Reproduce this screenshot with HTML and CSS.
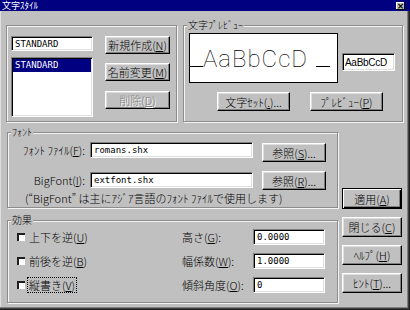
FILE: index.html
```html
<!DOCTYPE html>
<html lang="ja">
<head>
<meta charset="utf-8">
<title>文字スタイル</title>
<link rel="stylesheet" href="styles.css">
</head>
<body>
<div class="win">
  <div class="title">
    <span class="title-text">文字ｽﾀｲﾙ</span>
    <span class="close">×</span>
  </div>
  <div class="top">
    <div class="group g-style">
      <div class="style-left">
        <div class="field f-name">STANDARD</div>
        <div class="list"><div class="list-sel">STANDARD</div></div>
      </div>
      <div class="style-btns">
        <div class="btn b-style">新規作成(<u>N</u>)</div>
        <div class="btn b-style">名前変更(<u>M</u>)</div>
        <div class="btn b-style disabled">削除(<u>D</u>)</div>
      </div>
    </div>
    <div class="group g-preview">
      <span class="legend">文字ﾌﾟﾚﾋﾞｭｰ</span>
      <div class="pv-row">
        <div class="pv-box"><span class="pv-line"></span><span class="pv-text">AaBbCcD</span><span class="pv-line pv-line-r"></span></div>
        <div class="field pv-small">AaBbCcD</div>
      </div>
      <div class="pv-btns">
        <div class="btn b-pv">文字ｾｯﾄ(<u>.</u>)...</div>
        <div class="btn b-pv">ﾌﾟﾚﾋﾞｭｰ(<u>P</u>)</div>
      </div>
    </div>
  </div>
  <div class="bottom">
    <div class="left-col">
      <div class="group g-font">
        <span class="legend">ﾌｫﾝﾄ</span>
        <div class="font-row r1">
          <span class="flabel">ﾌｫﾝﾄ ﾌｧｲﾙ(<u>F</u>):</span>
          <div class="field f-font">romans.shx</div>
          <div class="btn b-ref">参照(<u>S</u>)...</div>
        </div>
        <div class="font-row r2">
          <span class="flabel">BigFont(<u>I</u>):</span>
          <div class="field f-font">extfont.shx</div>
          <div class="btn b-ref">参照(<u>R</u>)...</div>
        </div>
        <div class="note">(“BigFont” は主にｱｼﾞｱ言語のﾌｫﾝﾄ ﾌｧｲﾙで使用します)</div>
      </div>
      <div class="group g-effect">
        <span class="legend">効果</span>
        <div class="effect-grid">
          <div class="chk"><span class="box"></span><span class="chk-label">上下を逆(<u>U</u>)</span></div>
          <span class="elabel">高さ(<u>G</u>):</span>
          <div class="field f-num">0.0000</div>
          <div class="chk"><span class="box"></span><span class="chk-label">前後を逆(<u>B</u>)</span></div>
          <span class="elabel">幅係数(<u>W</u>):</span>
          <div class="field f-num">1.0000</div>
          <div class="chk"><span class="box"></span><span class="chk-label focus">縦書き(<u>V</u>)</span></div>
          <span class="elabel">傾斜角度(<u>O</u>):</span>
          <div class="field f-num">0</div>
        </div>
      </div>
    </div>
    <div class="right-col">
      <div class="btn b-side default">適用(<u>A</u>)</div>
      <div class="btn b-side">閉じる(<u>C</u>)</div>
      <div class="btn b-side">ﾍﾙﾌﾟ(<u>H</u>)</div>
      <div class="btn b-side">ﾋﾝﾄ(<u>T</u>)...</div>
    </div>
  </div>
</div>
</body>
</html>
```

FILE: styles.css
```css
* { box-sizing: border-box; }
html, body { margin: 0; padding: 0; }
body {
  background: #c0c0c0;
  font-family: "Noto Sans CJK JP", "Noto Sans", sans-serif;
  font-weight: 300;
  font-size: 11px;
  color: #000;
}
u { text-decoration: underline; text-underline-offset: 1px; }

.win {
  width: 410px;
  height: 310px;
  background: #c0c0c0;
  display: flex;
  flex-direction: column;
  overflow: hidden;
  box-shadow: inset -1px -1px #202020, inset -2px -2px #404040, inset -3px -3px #808080, inset 1px 0 #e0e0e0;
}

.title {
  height: 11px;
  background: #000080;
  display: flex;
  align-items: center;
  justify-content: space-between;
  padding: 0 5px 0 2px;
}
.title-text {
  color: #fff;
  font-size: 9px;
  font-weight: 400;
  line-height: 11px;
}
.close {
  width: 9px;
  height: 8px;
  background: #c0c0c0;
  box-shadow: inset -1px -1px #000, inset 1px 1px #fff;
  font-size: 9px;
  font-weight: bold;
  line-height: 8px;
  text-align: center;
  font-family: "DejaVu Sans", sans-serif;
}

.group {
  position: relative;
  border: 1px solid #8c8c8c;
  box-shadow: inset 1px 1px #f4f4f4, 1px 1px #f4f4f4;
}
.legend {
  position: absolute;
  top: -7px;
  left: 3px;
  padding: 0 1px;
  background: #c0c0c0;
  line-height: 12px;
  font-size: 10px;
  white-space: nowrap;
}

.field {
  background: #fff;
  border: 1px solid;
  border-color: #808080 #fff #fff #808080;
  box-shadow: inset 1px 1px #000, inset -1px -1px #dfdfdf;
  font-family: "DejaVu Sans Mono", monospace;
  font-weight: 400;
  font-size: 9px;
  display: flex;
  align-items: center;
  padding-left: 3px;
  white-space: nowrap;
}

.btn {
  display: flex;
  align-items: center;
  justify-content: center;
  background: #c0c0c0;
  border: 1px solid;
  border-color: #fff #000 #000 #fff;
  box-shadow: inset -1px -1px #808080, inset 1px 1px #dfdfdf;
  font-size: 11px;
  line-height: 12px;
  white-space: nowrap;
}
.btn.disabled {
  color: #808080;
  text-shadow: 1px 1px #fff;
}
.btn.default {
  border: 1px solid #000;
  box-shadow: inset 1px 1px #fff, inset -1px -1px #000, inset -2px -2px #808080;
}

/* top row */
.top {
  display: flex;
  gap: 6px;
  margin-top: 14px;
  padding-left: 6px;
}
.g-style {
  width: 171px;
  height: 97px;
  display: flex;
  padding: 10px 0 0 4px;
}
.style-left {
  width: 82px;
  display: flex;
  flex-direction: column;
}
.f-name { height: 15px; }
.list {
  margin-top: 6px;
  height: 60px;
  background: #fff;
  border: 1px solid;
  border-color: #808080 #fff #fff #808080;
  box-shadow: inset 1px 1px #000, inset -1px -1px #dfdfdf;
}
.list-sel {
  margin: 1px 1px 0 1px;
  height: 13px;
  background: #000080;
  color: #fff;
  font-family: "DejaVu Sans Mono", monospace;
  font-weight: 400;
  font-size: 9px;
  line-height: 13px;
  padding-left: 2px;
}
.style-btns {
  margin-left: 12px;
  width: 65px;
  display: flex;
  flex-direction: column;
  gap: 9px;
}
.b-style { height: 18px; }
.b-style.disabled { margin-top: 1px; }

.g-preview {
  width: 220px;
  height: 97px;
  padding: 7px 0 0 5px;
}
.pv-row { display: flex; }
.pv-box {
  width: 149px;
  height: 50px;
  background: #fff;
  border: 1px solid #000;
  display: flex;
  align-items: baseline;
  padding-top: 11px;
  overflow: hidden;
}
.pv-line {
  width: 13px;
  height: 1px;
  background: #000;
  flex: none;
}
.pv-line-r { width: 14px; margin-left: 8px; }
.pv-text {
  font-family: "Roboto", "DejaVu Sans", sans-serif;
  font-weight: 100;
  font-size: 24px;
  line-height: 28px;
  letter-spacing: 1px;
  white-space: nowrap;
}
.pv-small {
  margin: 20px 0 0 4px;
  width: 53px;
  height: 18px;
  font-family: "Liberation Sans", sans-serif;
  font-size: 10px;
  letter-spacing: -0.3px;
  padding-left: 2px;
}
.pv-btns {
  display: flex;
  gap: 20px;
  margin-top: 9px;
  padding-left: 28px;
}
.b-pv { width: 73px; height: 19px; }

/* bottom */
.bottom {
  display: flex;
  margin-top: 10px;
  padding-left: 7px;
}
.left-col { width: 331px; }
.g-font {
  height: 76px;
  padding-top: 9px;
}
.font-row {
  display: flex;
  align-items: flex-start;
  height: 20px;
}
.r2 { margin-top: 9px; }
.flabel {
  width: 77px;
  text-align: right;
  line-height: 16px;
  white-space: nowrap;
}
.r2 .flabel { margin-top: 1px; }
.f-font {
  margin-left: 5px;
  width: 163px;
  height: 16px;
}
.r2 .f-font { margin-top: 1px; }
.b-ref {
  margin-left: 9px;
  width: 64px;
  height: 19px;
}
.r1 .b-ref { margin-top: 1px; }
.note {
  margin-top: 1px;
  padding-left: 17px;
  line-height: 13px;
  white-space: nowrap;
}

.g-effect {
  margin-top: 12px;
  height: 83px;
  padding: 8px 0 0 9px;
}
.effect-grid {
  display: grid;
  grid-template-columns: 165px 71px 72px;
  grid-template-rows: repeat(3, 16px);
  row-gap: 8px;
  align-items: center;
}
.chk {
  display: flex;
  align-items: center;
}
.box {
  width: 8px;
  height: 8px;
  background: #fff;
  border-top: 2px solid #202020;
  border-left: 2px solid #202020;
  flex: none;
}
.chk-label {
  margin-left: 3px;
  line-height: 14px;
  padding: 0 1px;
}
.chk-label.focus { outline: 1px dotted #000; }
.elabel {
  line-height: 16px;
  white-space: nowrap;
}
.f-num { width: 72px; height: 16px; }

.right-col {
  margin-left: 4px;
  width: 60px;
  display: flex;
  flex-direction: column;
}
.b-side { height: 20px; margin-top: 8px; }
.b-side.default { margin-top: 56px; height: 21px; }
```
